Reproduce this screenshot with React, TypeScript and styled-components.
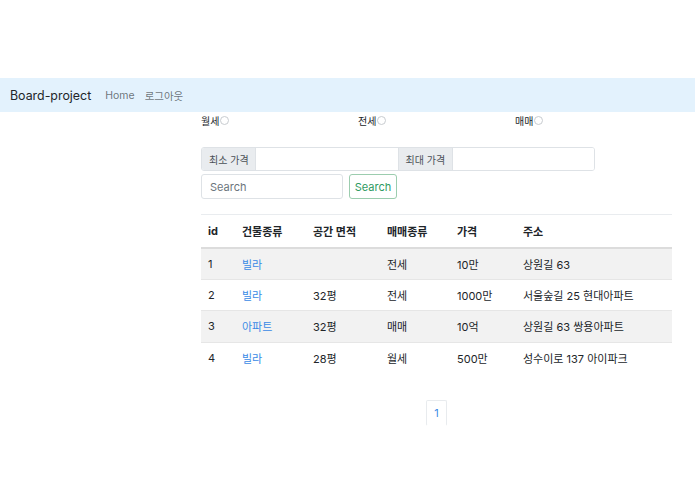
import styled, { createGlobalStyle } from 'styled-components'

/* Global */
const GlobalStyle = createGlobalStyle`
  * { box-sizing: border-box; }
  body {
    margin: 0;
    background: #fff;
    color: #212529;
    font-family: Inter, "Noto Sans CJK KR", sans-serif;
    font-size: 11px;
  }
`

/* Styled components */
const Page = styled.div`
  width: 695px;
  padding-top: 78px;
`

const NavBar = styled.nav`
  height: 34px;
  background: #e3f2fd;
  display: flex;
  align-items: center;
  padding: 0 10px;

  & .brand {
    font-size: 12.4px;
    color: #212529;
    margin-right: 14px;
  }

  & a {
    font-size: 10.5px;
    color: rgba(0, 0, 0, 0.55);
    text-decoration: none;
    margin-right: 10px;
  }
`

const Content = styled.main`
  width: 471px;
  margin-left: 201px;
  display: flex;
  flex-direction: column;
`

const RadioRow = styled.div`
  display: grid;
  grid-template-columns: repeat(3, 157px);
  height: 17px;
  align-items: center;

  & label {
    display: flex;
    align-items: center;
    font-size: 10px;
    color: #212529;
  }
`

const Radio = styled.span`
  width: 9px;
  height: 9px;
  border: 1px solid #c8ccd0;
  border-radius: 50%;
  margin-left: 1px;
`

const PriceGroup = styled.div`
  display: flex;
  width: 394px;
  height: 24px;
  margin-top: 18px;
  border: 1px solid #dee2e6;
  border-radius: 3px;
  overflow: hidden;
`

const GroupLabel = styled.span<{ $w: number; $first?: boolean }>`
  width: ${p => p.$w}px;
  background: #e9ecef;
  color: #495057;
  font-size: 10px;
  display: flex;
  align-items: center;
  padding-left: 7px;
  border-right: 1px solid #dee2e6;
  border-left: ${p => (p.$first ? 'none' : '1px solid #dee2e6')};
`

const GroupInput = styled.span`
  flex: 1;
  background: #fff;
`

const SearchRow = styled.form`
  display: flex;
  gap: 6px;
  margin-top: 3px;
  height: 25px;
`

const SearchInput = styled.div`
  width: 142px;
  border: 1px solid #dee2e6;
  border-radius: 3px;
  color: #6c757d;
  font-size: 11px;
  display: flex;
  align-items: center;
  padding-left: 8px;
`

const SearchButton = styled.button`
  width: 48px;
  border: 1px solid #9ccdaf;
  border-radius: 3px;
  background: #fff;
  color: #2e9a62;
  font-family: inherit;
  font-size: 11px;
  padding: 0;
`

const Table = styled.table`
  margin-top: 15px;
  width: 471px;
  border-collapse: collapse;
  table-layout: fixed;

  & th, & td {
    text-align: left;
    padding: 0 7px;
    font-size: 11px;
    white-space: nowrap;
  }

  & thead tr {
    height: 33px;
    border-top: 1px solid #e9ecef;
    border-bottom: 2px solid #dcdcdc;
  }

  & th { font-weight: 700; }

  & tbody tr {
    height: 31.6px;
    border-bottom: 1px solid #e6e6e6;
  }

  & tbody tr:last-child { border-bottom: none; }

  & tbody tr:nth-child(odd) { background: #f2f2f2; }

  & td.link { color: #3a8ae6; }
`

const Pager = styled.ul`
  list-style: none;
  margin: 26px 0 0;
  padding: 0;
  display: flex;
  justify-content: center;

  & li {
    width: 21px;
    height: 26px;
    border: 1px solid #e8ebee;
    border-bottom-color: transparent;
    border-radius: 2px;
    color: #3a8ae6;
    font-size: 11px;
    display: flex;
    align-items: center;
    justify-content: center;
    padding-top: 1px;
  }
`

const rows = [
  { id: 1, kind: '빌라', area: '', deal: '전세', price: '10만', addr: '상원길 63' },
  { id: 2, kind: '빌라', area: '32평', deal: '전세', price: '1000만', addr: '서울숲길 25 현대아파트' },
  { id: 3, kind: '아파트', area: '32평', deal: '매매', price: '10억', addr: '상원길 63 쌍용아파트' },
  { id: 4, kind: '빌라', area: '28평', deal: '월세', price: '500만', addr: '성수이로 137 아이파크' },
]

export default function App() {
  return (
    <Page>
      <GlobalStyle />
      <NavBar>
        <span className='brand'>Board-project</span>
        <a href='#'>Home</a>
        <a href='#'>로그아웃</a>
      </NavBar>

      <Content>
        <RadioRow>
          <label>월세<Radio /></label>
          <label>전세<Radio /></label>
          <label>매매<Radio /></label>
        </RadioRow>

        <PriceGroup>
          <GroupLabel $w={54} $first>최소 가격</GroupLabel>
          <GroupInput />
          <GroupLabel $w={55}>최대 가격</GroupLabel>
          <GroupInput />
        </PriceGroup>

        <SearchRow>
          <SearchInput>Search</SearchInput>
          <SearchButton type='button'>Search</SearchButton>
        </SearchRow>

        <Table>
          <colgroup>
            <col style={{ width: 34 }} />
            <col style={{ width: 71 }} />
            <col style={{ width: 74 }} />
            <col style={{ width: 70 }} />
            <col style={{ width: 66 }} />
            <col />
          </colgroup>
          <thead>
            <tr>
              <th>id</th>
              <th>건물종류</th>
              <th>공간 면적</th>
              <th>매매종류</th>
              <th>가격</th>
              <th>주소</th>
            </tr>
          </thead>
          <tbody>
            {rows.map(r => (
              <tr key={r.id}>
                <td>{r.id}</td>
                <td className='link'>{r.kind}</td>
                <td>{r.area}</td>
                <td>{r.deal}</td>
                <td>{r.price}</td>
                <td>{r.addr}</td>
              </tr>
            ))}
          </tbody>
        </Table>

        <Pager>
          <li>1</li>
        </Pager>
      </Content>
    </Page>
  )
}
